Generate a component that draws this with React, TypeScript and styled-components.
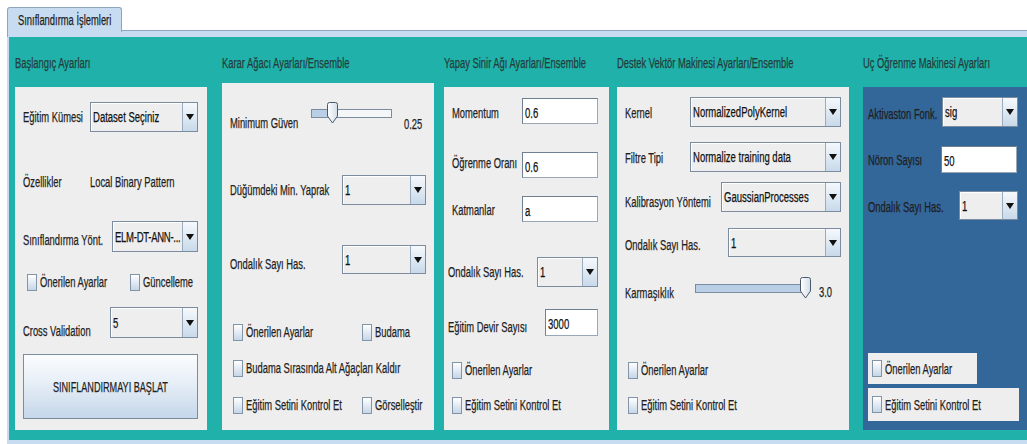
import React from 'react'
import styled, { createGlobalStyle, css } from 'styled-components'

const GlobalStyle = createGlobalStyle`
  * { box-sizing: border-box; }
  body {
    margin: 0;
    background: #ffffff;
    overflow: hidden;
    font-family: "Liberation Sans", Arial, sans-serif;
  }
`

// Swing-like narrow text: a regular face squeezed horizontally
const narrow = css`
  display: inline-block;
  font-size: 14px;
  line-height: 16px;
  white-space: nowrap;
  -webkit-text-stroke: 0.25px currentColor;
  transform-origin: 0 50%;
`

const Page = styled.div`
  padding: 6px 0 0 7px;
  width: 1040px;
`

const TabStrip = styled.div`
  display: flex;
  align-items: flex-end;
  height: 25px;
`

const Tab = styled.div`
  width: 115px;
  height: 25px;
  margin-bottom: -1px;
  padding-left: 10px;
  display: flex;
  align-items: center;
  background: #c8dcf1;
  border: 1px solid #8ea5bf;
  border-bottom: none;
  border-radius: 3px 3px 0 0;
  position: relative;
  z-index: 1;
`

const TabRest = styled.div`
  flex: 1;
  border-bottom: 1px solid #8ea5bf;
`

const TabBand = styled.div`
  height: 6px;
  background: #c8dcf1;
  border-left: 1px solid #8ea5bf;
`

const Content = styled.div`
  height: 407px;
  display: flex;
  padding: 18px 0 0 6px;
  background: #20b2aa;
  border-left: 2px solid #c8dcf1;
  border-bottom: 4px solid #c8dcf1;
`

const Column = styled.div<{ $w: number; $ml: number }>`
  flex: none;
  width: ${p => p.$w}px;
  margin-left: ${p => p.$ml}px;
  display: flex;
  flex-direction: column;
`

const Title = styled.div`
  ${narrow};
  height: 16px;
  color: #223d3b;
  transform: scaleX(0.67);
`

const Box = styled.div<{ $mt: number; $h: number; $blue?: boolean }>`
  margin-top: ${p => p.$mt}px;
  height: ${p => p.$h}px;
  background: ${p => (p.$blue ? '#336699' : '#eeeeee')};
  display: flex;
  flex-direction: column;
`

const Row = styled.div<{ $mt: number; $h: number; $pl: number }>`
  flex: none;
  display: flex;
  align-items: center;
  margin-top: ${p => p.$mt}px;
  height: ${p => p.$h}px;
  padding-left: ${p => p.$pl}px;
`

const Label = styled.span<{ $w?: number; $dy?: number; $ml?: number }>`
  ${narrow};
  flex: none;
  width: ${p => (p.$w ? `${p.$w}px` : 'auto')};
  margin-left: ${p => p.$ml ?? 0}px;
  color: #1f1f1f;
  transform: translateY(${p => p.$dy ?? 0}px) scaleX(0.67);
`

const Txt = styled.span<{ $tight?: boolean }>`
  ${narrow};
  color: #111111;
  letter-spacing: ${p => (p.$tight ? '-0.4px' : 'normal')};
  transform: scaleX(0.68);
`

const Combo = styled.div<{ $w: number; $h: number }>`
  flex: none;
  display: flex;
  width: ${p => p.$w}px;
  height: ${p => p.$h}px;
  border: 1px solid #7b8c9e;
  background: #eeeeee;
`

const ComboValue = styled.div`
  flex: 1;
  min-width: 0;
  display: flex;
  align-items: center;
  padding-left: 2px;
  border-right: 1px solid #9aabbd;
  box-shadow: inset 1px 1px 0 #ffffff;
`

const ComboArrow = styled.div`
  flex: none;
  width: 14px;
  display: flex;
  align-items: center;
  justify-content: center;
  background: linear-gradient(#f6f9fc, #c8d9ea);
`

const Field = styled.div<{ $w: number; $h: number }>`
  flex: none;
  display: flex;
  align-items: center;
  width: ${p => p.$w}px;
  height: ${p => p.$h}px;
  padding: 3px 0 0 2px;
  background: #ffffff;
  border: 1px solid #9aa8b6;
  border-top-color: #6f7f90;
  border-left-color: #6f7f90;
`

const CheckRow = styled.div<{ $w?: number }>`
  flex: none;
  display: flex;
  align-items: center;
  gap: 3px;
  width: ${p => (p.$w ? `${p.$w}px` : 'auto')};
`

const CheckBox = styled.span`
  flex: none;
  width: 10px;
  height: 17px;
  border: 1px solid #8194a8;
  background: linear-gradient(#ffffff, #c6d6e7);
`

const CheckPanel = styled.div<{ $w: number; $h: number; $mt: number }>`
  flex: none;
  display: flex;
  align-items: center;
  width: ${p => p.$w}px;
  height: ${p => p.$h}px;
  margin: ${p => p.$mt}px 0 0 5px;
  padding-left: 4px;
  background: #eeeeee;
`

const SliderWrap = styled.div<{ $w: number }>`
  flex: none;
  position: relative;
  width: ${p => p.$w}px;
  height: 22px;
`

const Track = styled.div<{ $fill: number }>`
  position: absolute;
  left: 0;
  right: 0;
  top: 7px;
  height: 9px;
  border: 1px solid #7b8c9e;
  background: linear-gradient(to right, #b9cfe6 ${p => p.$fill}px, #f4f6f8 ${p => p.$fill}px);
`

const Thumb = styled.svg<{ $x: number }>`
  position: absolute;
  top: 0;
  left: ${p => p.$x}px;
`

const StartButton = styled.button`
  flex: none;
  width: 175px;
  height: 65px;
  margin: 16px 0 0 8px;
  display: flex;
  align-items: center;
  justify-content: center;
  border: 1px solid #7b8c9e;
  background: linear-gradient(#fbfcfe, #e6eef6 45%, #c5d7ea);
  font-family: inherit;
  padding: 0;
`

const ButtonText = styled.span`
  ${narrow};
  color: #1e1e1e;
  transform-origin: 50% 50%;
  transform: scaleX(0.65);
`

const Arrow = () => (
  <svg width="8" height="6" viewBox="0 0 8 6">
    <polygon points="0,0 8,0 4,6" fill="#111" />
  </svg>
)

const Select = ({ w, h, value, tight }: { w: number; h: number; value: string; tight?: boolean }) => (
  <Combo $w={w} $h={h}>
    <ComboValue>
      <Txt $tight={tight}>{value}</Txt>
    </ComboValue>
    <ComboArrow>
      <Arrow />
    </ComboArrow>
  </Combo>
)

const Input = ({ w, h, value }: { w: number; h: number; value: string }) => (
  <Field $w={w} $h={h}>
    <Txt>{value}</Txt>
  </Field>
)

const Check = ({ text, w }: { text: string; w?: number }) => (
  <CheckRow $w={w}>
    <CheckBox />
    <Label>{text}</Label>
  </CheckRow>
)

const Slider = ({ w, thumb }: { w: number; thumb: number }) => (
  <SliderWrap $w={w}>
    <Track $fill={thumb + 6} />
    <Thumb $x={thumb} width="13" height="22" viewBox="0 0 13 22">
      <defs>
        <linearGradient id="thumbFill" x1="0" y1="0" x2="1" y2="0">
          <stop offset="0" stopColor="#ffffff" />
          <stop offset="1" stopColor="#d3dde8" />
        </linearGradient>
      </defs>
      <path d="M1.5 2.5 Q1.5 0.5 3.5 0.5 H9.5 Q11.5 0.5 11.5 2.5 V14 L6.5 21 L1.5 14 Z" fill="url(#thumbFill)" stroke="#4a5a6a" strokeWidth="1" />
    </Thumb>
  </SliderWrap>
)

export default function App() {
  return (
    <Page>
      <GlobalStyle />
      <TabStrip>
        <Tab>
          <Label>Sınıflandırma İşlemleri</Label>
        </Tab>
        <TabRest />
      </TabStrip>
      <TabBand />
      <Content>
        {/* Başlangıç ayarları */}
        <Column $w={192} $ml={0}>
          <Title>Başlangıç Ayarları</Title>
          <Box $mt={16} $h={343}>
            <Row $mt={15} $h={30} $pl={8}>
              <Label $w={67}>Eğitim Kümesi</Label>
              <Select w={108} h={30} value="Dataset Seçiniz" />
            </Row>
            <Row $mt={40} $h={20} $pl={8}>
              <Label $w={67}>Özellikler</Label>
              <Label>Local Binary Pattern</Label>
            </Row>
            <Row $mt={29} $h={31} $pl={8}>
              <Label $w={89} $dy={3}>Sınıflandırma Yönt.</Label>
              <Select w={86} h={31} value="ELM-DT-ANN-..." tight />
            </Row>
            <Row $mt={20} $h={20} $pl={12}>
              <Check text="Önerilen Ayarlar" w={103} />
              <Check text="Güncelleme" />
            </Row>
            <Row $mt={15} $h={31} $pl={8}>
              <Label $w={87} $dy={8}>Cross Validation</Label>
              <Select w={88} h={31} value="5" />
            </Row>
            <StartButton>
              <ButtonText>SINIFLANDIRMAYI BAŞLAT</ButtonText>
            </StartButton>
          </Box>
        </Column>

        {/* Karar ağacı */}
        <Column $w={212} $ml={15}>
          <Title>Karar Ağacı Ayarları/Ensemble</Title>
          <Box $mt={12} $h={347}>
            <Row $mt={19} $h={22} $pl={8}>
              <Label $w={81} $dy={10}>Minimum Güven</Label>
              <Slider w={81} thumb={15} />
              <Label $ml={12} $dy={11}>0.25</Label>
            </Row>
            <Row $mt={51} $h={30} $pl={8}>
              <Label $w={112}>Düğümdeki Min. Yaprak</Label>
              <Select w={84} h={30} value="1" />
            </Row>
            <Row $mt={40} $h={29} $pl={8}>
              <Label $w={112} $dy={4}>Ondalık Sayı Has.</Label>
              <Select w={84} h={29} value="1" />
            </Row>
            <Row $mt={48} $h={20} $pl={11}>
              <Check text="Önerilen Ayarlar" w={129} />
              <Check text="Budama" />
            </Row>
            <Row $mt={16} $h={20} $pl={11}>
              <Check text="Budama Sırasında Alt Ağaçları Kaldır" />
            </Row>
            <Row $mt={17} $h={20} $pl={11}>
              <Check text="Eğitim Setini Kontrol Et" w={129} />
              <Check text="Görselleştir" />
            </Row>
          </Box>
        </Column>

        {/* Yapay sinir ağı */}
        <Column $w={165} $ml={10}>
          <Title>Yapay Sinir Ağı Ayarları/Ensemble</Title>
          <Box $mt={16} $h={343}>
            <Row $mt={11} $h={26} $pl={8}>
              <Label $w={70} $dy={2}>Momentum</Label>
              <Input w={76} h={26} value="0.6" />
            </Row>
            <Row $mt={28} $h={26} $pl={8}>
              <Label $w={70} $dy={-2}>Öğrenme Oranı</Label>
              <Input w={76} h={26} value="0.6" />
            </Row>
            <Row $mt={18} $h={26} $pl={8}>
              <Label $w={70} $dy={1}>Katmanlar</Label>
              <Input w={76} h={26} value="a" />
            </Row>
            <Row $mt={35} $h={30} $pl={4}>
              <Label $w={89}>Ondalık Sayı Has.</Label>
              <Select w={61} h={30} value="1" />
            </Row>
            <Row $mt={22} $h={27} $pl={4}>
              <Label $w={97} $dy={4}>Eğitim Devir Sayısı</Label>
              <Input w={53} h={27} value="3000" />
            </Row>
            <Row $mt={24} $h={20} $pl={8}>
              <Check text="Önerilen Ayarlar" />
            </Row>
            <Row $mt={15} $h={20} $pl={8}>
              <Check text="Eğitim Setini Kontrol Et" />
            </Row>
          </Box>
        </Column>

        {/* Destek vektör makinesi */}
        <Column $w={232} $ml={8}>
          <Title>Destek Vektör Makinesi Ayarları/Ensemble</Title>
          <Box $mt={16} $h={343}>
            <Row $mt={10} $h={30} $pl={8}>
              <Label $w={65} $dy={1}>Kernel</Label>
              <Select w={151} h={30} value="NormalizedPolyKernel" />
            </Row>
            <Row $mt={15} $h={30} $pl={8}>
              <Label $w={65} $dy={1}>Filtre Tipi</Label>
              <Select w={151} h={30} value="Normalize training data" />
            </Row>
            <Row $mt={10} $h={30} $pl={8}>
              <Label $w={96} $dy={5}>Kalibrasyon Yöntemi</Label>
              <Select w={120} h={30} value="GaussianProcesses" />
            </Row>
            <Row $mt={16} $h={29} $pl={8}>
              <Label $w={103} $dy={2}>Ondalık Sayı Has.</Label>
              <Select w={113} h={29} value="1" />
            </Row>
            <Row $mt={20} $h={22} $pl={8}>
              <Label $w={70} $dy={5}>Karmaşıklık</Label>
              <Slider w={112} thumb={104} />
              <Label $ml={12} $dy={4}>3.0</Label>
            </Row>
            <Row $mt={61} $h={20} $pl={11}>
              <Check text="Önerilen Ayarlar" />
            </Row>
            <Row $mt={15} $h={20} $pl={11}>
              <Check text="Eğitim Setini Kontrol Et" />
            </Row>
          </Box>
        </Column>

        {/* Uç öğrenme makinesi */}
        <Column $w={175} $ml={14}>
          <Title>Uç Öğrenme Makinesi Ayarları</Title>
          <Box $mt={16} $h={343} $blue>
            <Row $mt={10} $h={30} $pl={5}>
              <Label $w={74} $dy={2}>Aktivaston Fonk.</Label>
              <Select w={76} h={30} value="sig" />
            </Row>
            <Row $mt={19} $h={27} $pl={5}>
              <Label $w={73}>Nöron Sayısı</Label>
              <Input w={76} h={27} value="50" />
            </Row>
            <Row $mt={18} $h={29} $pl={5}>
              <Label $w={91} $dy={1}>Ondalık Sayı Has.</Label>
              <Select w={59} h={29} value="1" />
            </Row>
            <CheckPanel $w={109} $h={31} $mt={133}>
              <Check text="Önerilen Ayarlar" />
            </CheckPanel>
            <CheckPanel $w={151} $h={33} $mt={4}>
              <Check text="Eğitim Setini Kontrol Et" />
            </CheckPanel>
          </Box>
        </Column>
      </Content>
    </Page>
  )
}
